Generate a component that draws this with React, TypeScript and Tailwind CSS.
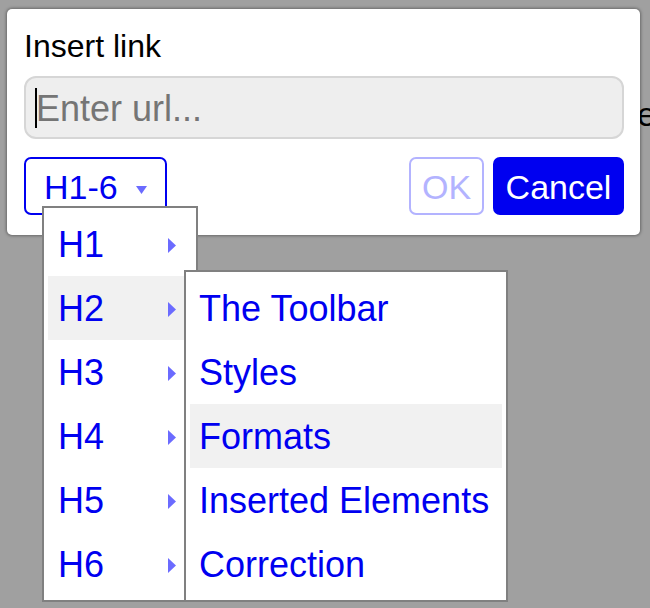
import { useState } from 'react';

const headings = ['H1', 'H2', 'H3', 'H4', 'H5', 'H6'];
const sections = ['The Toolbar', 'Styles', 'Formats', 'Inserted Elements', 'Correction'];

export default function App() {
  const [url, setUrl] = useState('');
  const [openHeading] = useState('H2');
  const [hoverSection] = useState('Formats');

  return (
    <div className="relative w-[650px] h-[608px] overflow-hidden bg-[#a0a0a0] font-['Liberation_Sans',Arial,sans-serif]">
      {/* Page behind the modal */}
      <div className="flex items-center h-[43px] mt-[92px]">
        <div className="w-[3px] h-full bg-[#0000ff]"></div>
        <div className="ml-[637px] text-[34px] leading-none text-black">e</div>
      </div>

      {/* Dialog */}
      <div className="absolute left-[7px] top-[9px] w-[633px] h-[226px] bg-white rounded-[5px] shadow-[0_0_3px_1px_rgba(0,0,0,0.35)] pt-[21px] pl-[17px] pr-[16px]">
        <h1 className="text-[32px] leading-[32px] text-black">Insert link</h1>

        <div className="relative mt-[14px] h-[63px]">
          <input
            value={url}
            onChange={(e) => setUrl(e.target.value)}
            placeholder="Enter url..."
            className="w-full h-full rounded-[12px] border-2 border-[#d6d6d6] bg-[#eeeeee] pl-[10px] pt-[2px] text-[36px] text-black placeholder:text-[#757575] outline-none"
          />
          <div className="absolute left-[11px] top-[12px] w-[2px] h-[40px] bg-black"></div>
        </div>

        <div className="flex items-center mt-[18px] h-[58px]">
          <div className="relative">
            <button className="flex items-center h-[58px] pl-[18px] pr-[18px] gap-[18px] pt-[2px] border-2 border-[#0000f0] rounded-[7px] text-[34px] leading-none text-[#0000f0]">
              <span>H1-6</span>
              <svg width="11" height="8" viewBox="0 0 11 8" className="mt-[6px]">
                <path d="M0 0 L11 0 L5.5 8 Z" fill="#6b6bff" />
              </svg>
            </button>

            {/* Heading menu */}
            <div className="absolute left-[18px] top-[49px] w-[156px] border-2 border-[#808080] bg-white p-[4px]">
              {headings.map((h) => (
                <div
                  key={h}
                  className={`flex items-center justify-between h-[64px] pl-[10px] pr-[16px] pt-[2px] text-[36px] leading-none text-[#0000f0] ${
                    h === openHeading ? 'bg-[#f1f1f1]' : ''
                  }`}
                >
                  <span>{h}</span>
                  <svg width="8" height="15" viewBox="0 0 8 15">
                    <path d="M0 0 L8 7.5 L0 15 Z" fill="#6b6bff" />
                  </svg>
                </div>
              ))}

              {/* Submenu */}
              <div className="absolute left-[140px] top-[62px] w-[324px] border-2 border-[#808080] bg-white p-[4px]">
                {sections.map((s) => (
                  <div
                    key={s}
                    className={`flex items-center h-[64px] pl-[9px] pt-[2px] text-[36px] leading-none text-[#0000f0] whitespace-nowrap ${
                      s === hoverSection ? 'bg-[#f1f1f1]' : ''
                    }`}
                  >
                    {s}
                  </div>
                ))}
              </div>
            </div>
          </div>

          <button className="ml-auto flex items-center justify-center w-[75px] h-[58px] pt-[2px] border-2 border-[#b3b3ff] rounded-[7px] text-[34px] leading-none text-[#b3b3ff]">
            OK
          </button>
          <button className="ml-[9px] flex items-center justify-center w-[131px] h-[58px] pt-[2px] bg-[#0000f0] rounded-[7px] text-[34px] leading-none text-white">
            Cancel
          </button>
        </div>
      </div>
    </div>
  );
}
